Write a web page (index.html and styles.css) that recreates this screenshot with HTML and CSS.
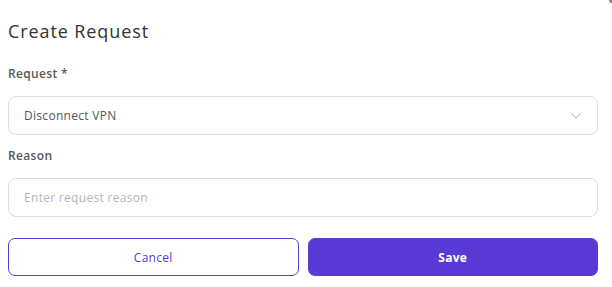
FILE: index.html
```html
<!DOCTYPE html>
<html lang="en">
<head>
<meta charset="utf-8">
<title>Create Request</title>
<link rel="stylesheet" href="styles.css">
</head>
<body>
<div class="dialog">
  <h1 class="title">Create Request</h1>
  <form class="form">
    <div class="field">
      <label class="label">Request *</label>
      <div class="select">
        <span class="select-value">Disconnect VPN</span>
        <svg class="chevron" width="12" height="7" viewBox="0 0 12 7"><path d="M1 1l5 5 5-5" fill="none" stroke="#c9c9d2" stroke-width="1.1"/></svg>
      </div>
    </div>
    <div class="field">
      <label class="label">Reason</label>
      <input class="input" type="text" placeholder="Enter request reason">
    </div>
    <div class="actions">
      <button type="button" class="btn btn-outline">Cancel</button>
      <button type="button" class="btn btn-primary">Save</button>
    </div>
  </form>
</div>
<div class="corner"></div>
</body>
</html>
```

FILE: styles.css
```css
* { box-sizing: border-box; }
html, body { margin: 0; background: #fff; }
body { font-family: "Open Sans", "Noto Sans", sans-serif; color: #333; }
.dialog { padding: 19px 14px 0 8px; }
.title { margin: 0; font-size: 18px; line-height: 24px; font-weight: 400; color: #333; letter-spacing: 0.9px; }
.form { margin-top: 23px; display: flex; flex-direction: column; }
.field { display: flex; flex-direction: column; gap: 14px; margin-bottom: 13px; }
.label { font-size: 12px; line-height: 16px; font-weight: 600; color: #585858; letter-spacing: 0.35px; }
.select, .input {
  height: 39px; border: 1px solid #dcdce6; border-radius: 8px; background: #fff;
  font-family: inherit; font-size: 12px; padding: 0 15px; letter-spacing: 0.3px;
}
.select { display: flex; align-items: center; justify-content: space-between; }
.select-value { color: #555; }
.input { width: 100%; outline: none; color: #555; }
.input::placeholder { color: #b4b4be; }
.actions { display: flex; gap: 9px; margin-top: 8px; }
.btn { flex: 1; height: 38px; border-radius: 7px; font-family: inherit; font-size: 12px; letter-spacing: 0.3px; cursor: pointer; }
.btn-outline { background: #fff; border: 1px solid #5a3bd6; color: #5a3bd6; }
.btn-primary { background: #5a3ad6; border: 1px solid #5a3ad6; color: #fff; font-weight: 700; }
.corner { position: absolute; top: 0; right: 0; width: 3px; height: 3px; background: #888; border-bottom-left-radius: 2px; }
```
